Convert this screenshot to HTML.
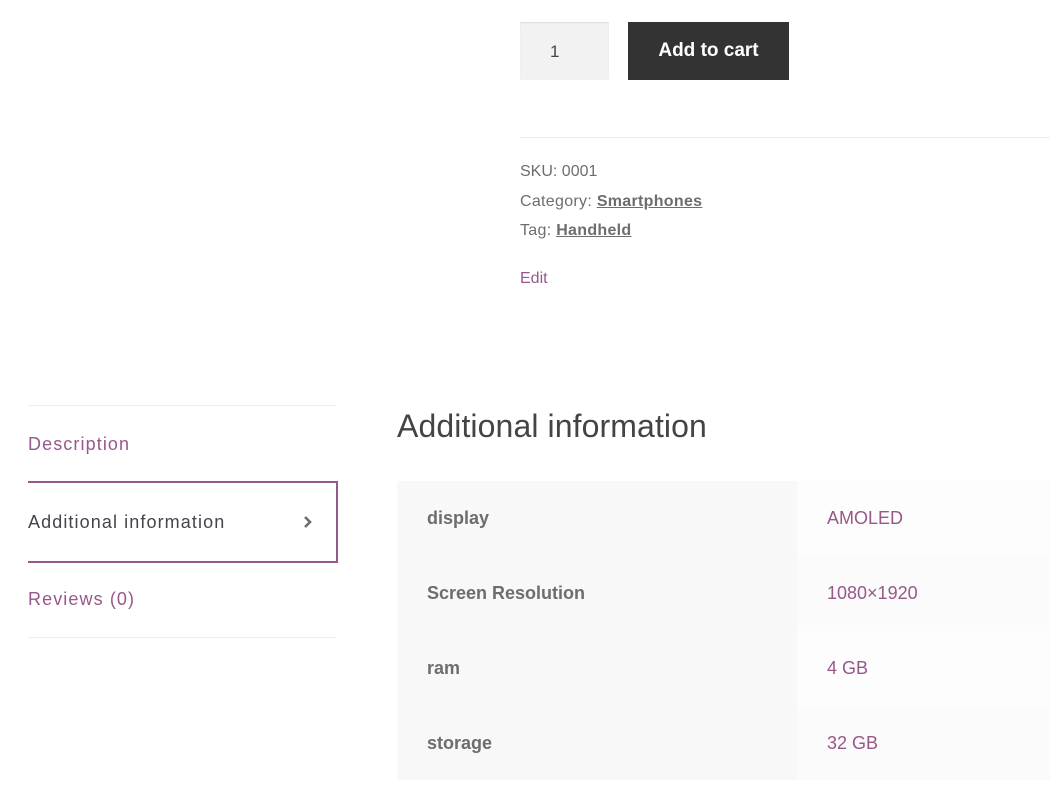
<!DOCTYPE html>
<html><head><style>
body{margin:0;width:1050px;height:807px;overflow:hidden;background:#fff;font-family:"Liberation Sans",sans-serif;color:#6d6d6d;position:relative}
.a{position:absolute;white-space:nowrap}
.p{color:#96588a}
.t{letter-spacing:1.1px}
</style></head><body>
<div class="a" style="left:520px;top:22px;width:89px;height:58px;background:#f2f2f2;border-radius:2px;box-shadow:inset 0 1px 1px rgba(0,0,0,.1)"></div>
<div class="a" style="left:550px;top:42px;font-size:17px;color:#43454b">1</div>
<div class="a" style="left:628px;top:22px;width:161px;height:58px;background:#333;color:#fff;font-weight:bold;font-size:19px;line-height:58px;text-align:center">Add to cart</div>
<div class="a" style="left:520px;top:137px;width:530px;height:1px;background:#eee"></div>
<div class="a" style="left:520px;top:163px;font-size:16px">SKU: 0001</div>
<div class="a" style="left:520px;top:193px;font-size:16px;letter-spacing:.3px">Category: <b style="text-decoration:underline">Smartphones</b></div>
<div class="a" style="left:520px;top:222px;font-size:16px;letter-spacing:.3px">Tag: <b style="text-decoration:underline">Handheld</b></div>
<div class="a p" style="left:520px;top:270px;font-size:16px">Edit</div>

<div class="a" style="left:28px;top:405px;width:308px;height:1px;background:#eee"></div>
<div class="a p t" style="left:28px;top:434px;font-size:18px">Description</div>
<div class="a" style="left:28px;top:481px;width:308px;height:78px;border:2px solid #96588a;border-left:none"></div>
<div class="a t" style="left:28px;top:512px;font-size:18px;color:#43454b">Additional information</div>
<svg class="a" style="left:303px;top:515px" width="10" height="14" viewBox="0 0 10 14"><path d="M2 2l5 5-5 5" fill="none" stroke="#6d6d6d" stroke-width="2.6"/></svg>
<div class="a p t" style="left:28px;top:589px;font-size:18px">Reviews (0)</div>
<div class="a" style="left:28px;top:637px;width:308px;height:1px;background:#eee"></div>

<div class="a" style="left:397px;top:408px;font-size:32px;color:#444;letter-spacing:.1px">Additional information</div>
<div class="a" style="left:397px;top:481px;width:400px;height:299px;background:#f8f8f8"></div>
<div class="a" style="left:797px;top:481px;width:253px;height:75px;background:#fdfdfd"></div>
<div class="a" style="left:797px;top:556px;width:253px;height:75px;background:#fbfbfb"></div>
<div class="a" style="left:797px;top:631px;width:253px;height:75px;background:#fdfdfd"></div>
<div class="a" style="left:797px;top:706px;width:253px;height:74px;background:#fbfbfb"></div>
<div class="a" style="left:427px;top:508px;font-size:18px;font-weight:bold">display</div>
<div class="a" style="left:427px;top:583px;font-size:18px;font-weight:bold">Screen Resolution</div>
<div class="a" style="left:427px;top:658px;font-size:18px;font-weight:bold">ram</div>
<div class="a" style="left:427px;top:733px;font-size:18px;font-weight:bold">storage</div>
<div class="a p" style="left:827px;top:508px;font-size:18px">AMOLED</div>
<div class="a p" style="left:827px;top:583px;font-size:18px">1080×1920</div>
<div class="a p" style="left:827px;top:658px;font-size:18px">4 GB</div>
<div class="a p" style="left:827px;top:733px;font-size:18px">32 GB</div>
</body></html>
